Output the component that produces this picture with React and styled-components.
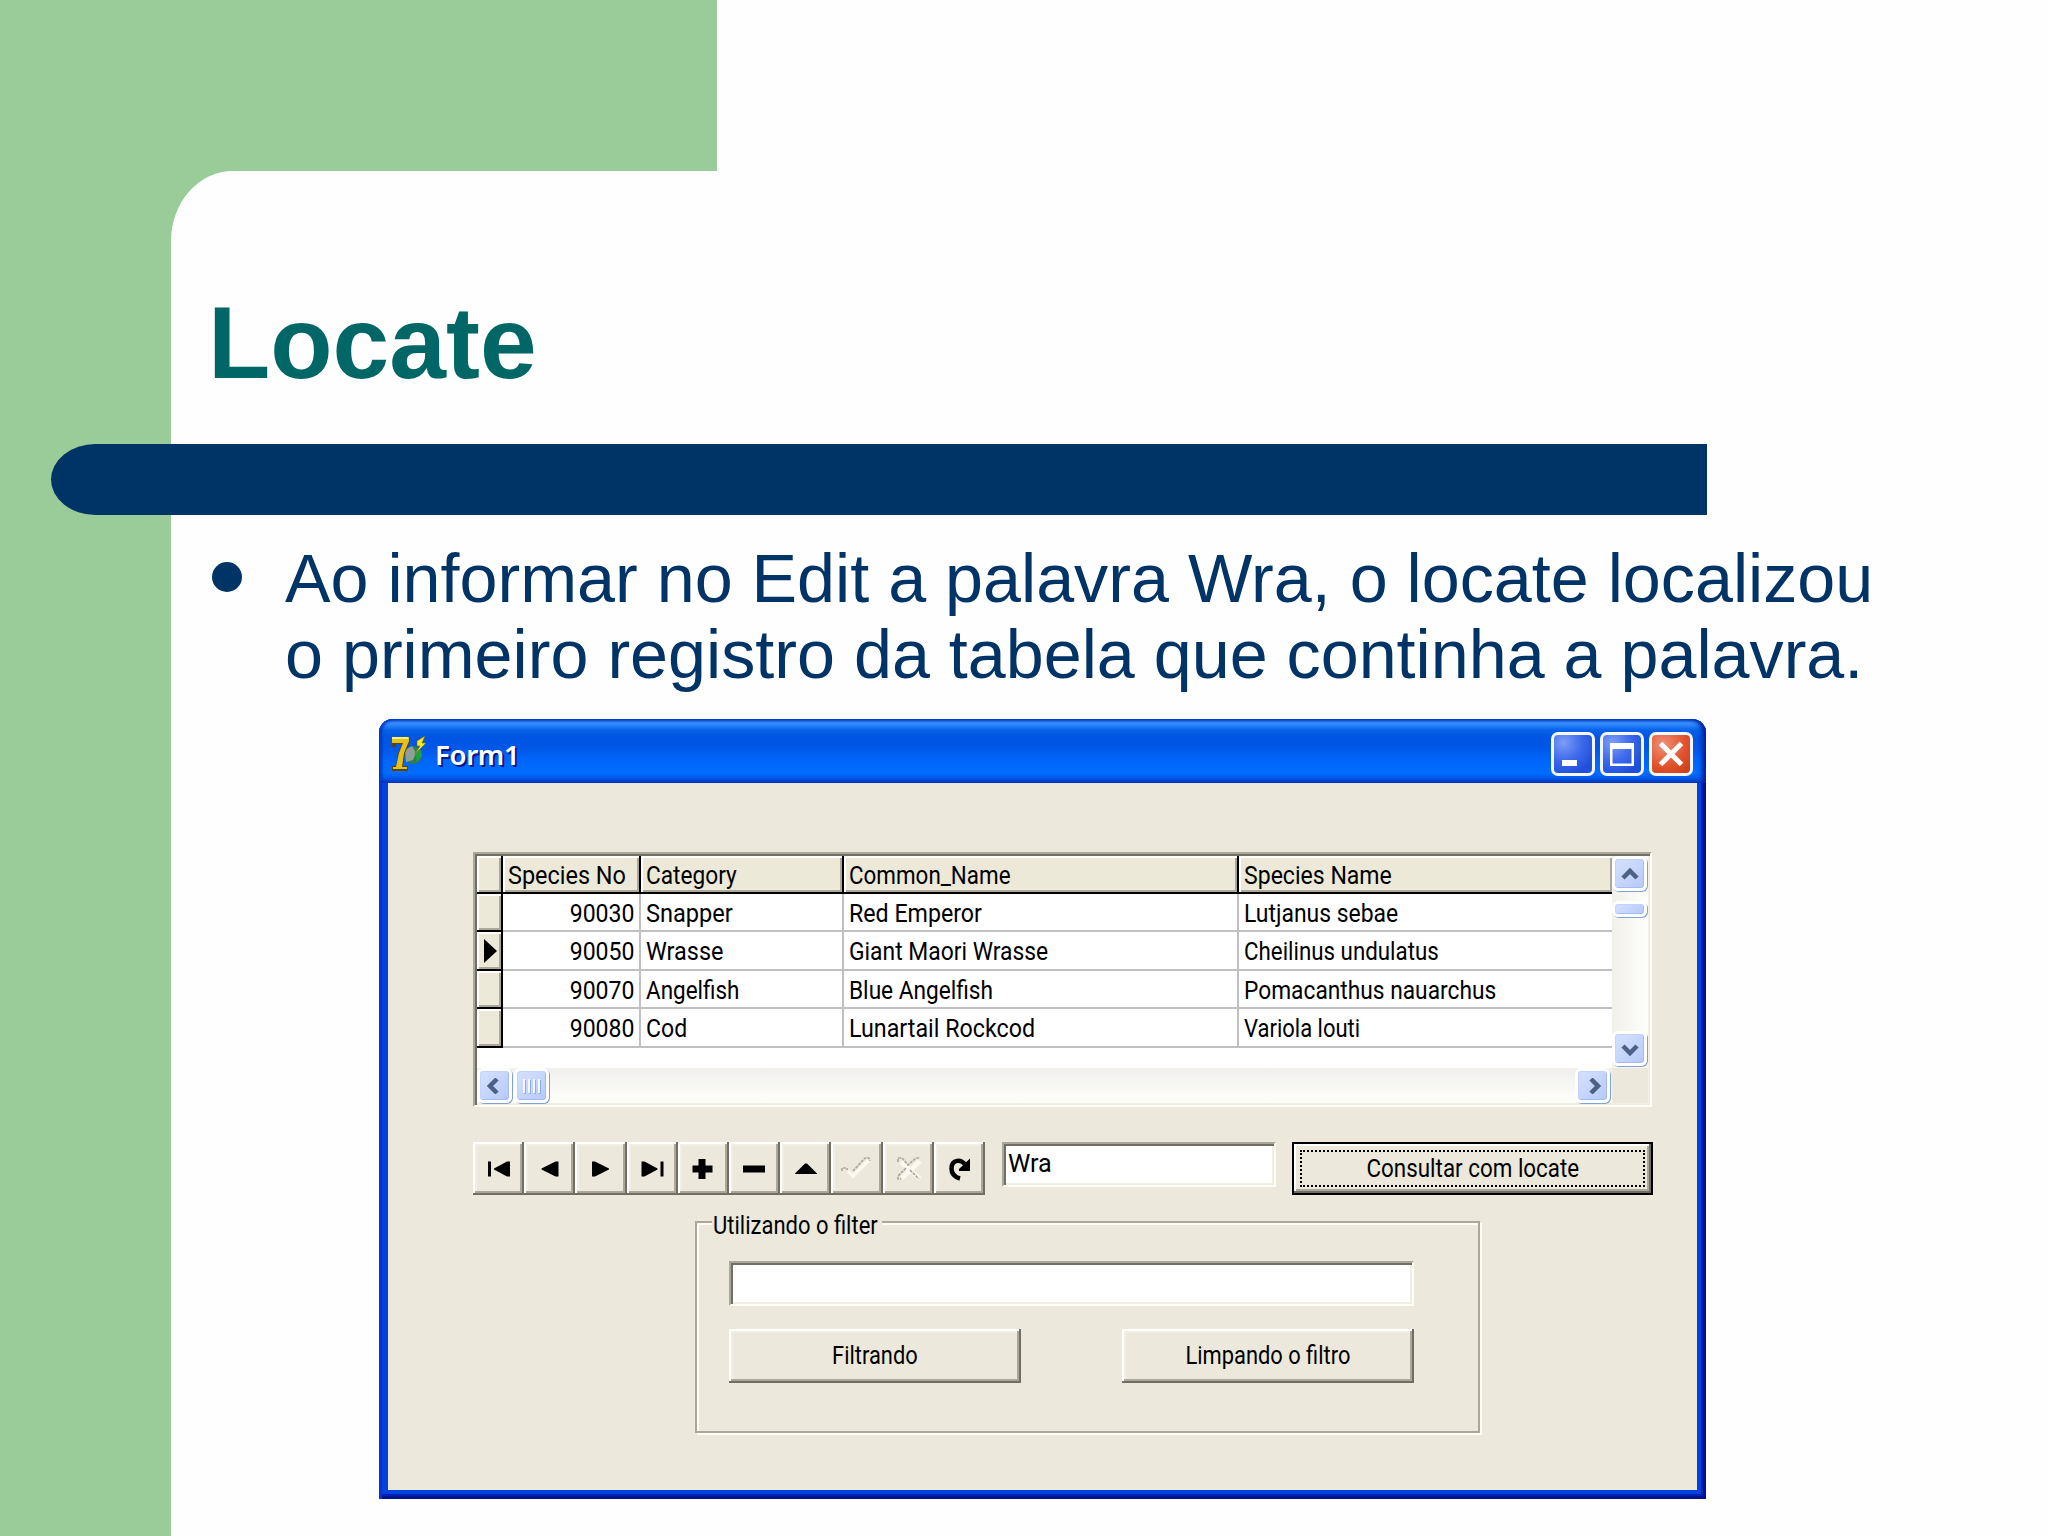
import React from "react";
import styled, { createGlobalStyle } from "styled-components";

const columns = [
  { key: "no", title: "Species No", narrow: 0.885 },
  { key: "category", title: "Category", narrow: 0.855 },
  { key: "common", title: "Common_Name", narrow: 0.845 },
  { key: "species", title: "Species Name", narrow: 0.87 },
];

// each cell is [text, horizontal narrowing]
const rows = [
  { no: ["90030", 0.87], category: ["Snapper", 0.89], common: ["Red Emperor", 0.875], species: ["Lutjanus sebae", 0.865] },
  {
    no: ["90050", 0.87],
    category: ["Wrasse", 0.885],
    common: ["Giant Maori Wrasse", 0.862],
    species: ["Cheilinus undulatus", 0.842],
    current: true,
  },
  { no: ["90070", 0.87], category: ["Angelfish", 0.848], common: ["Blue Angelfish", 0.855], species: ["Pomacanthus nauarchus", 0.858] },
  { no: ["90080", 0.87], category: ["Cod", 0.87], common: ["Lunartail Rockcod", 0.878], species: ["Variola louti", 0.83] },
];

const navIcons = [
  <path key="first" d="M15 19.5h3v15h-3zM37 19.5v15h-3l-13-7v-1l13-7z" />,
  <path key="prior" d="M34.5 19.5v15h-3l-14-7v-1l14-7z" />,
  <path key="next" d="M17 19.5v15h3l14-7v-1l-14-7z" />,
  <path key="last" d="M33.5 19.5h3v15h-3zM14.5 19.5v15h3l13-7v-1l-13-7z" />,
  <path key="insert" d="M20.5 17h7v6.5h7v7h-7V37h-7v-6.5h-6v-7h6z" />,
  <path key="delete" d="M14 23.5h22v7H14z" />,
  <path key="edit" d="M25 21.5h2L37 31.5v.5H15v-.5z" />,
  <g key="post" fill="none">
    <path d="M17 29l5 5 16-16" stroke="#fbf9f0" strokeWidth="3.5" />
    <path d="M11 29v-3h5v2M22 29l12-13h4l1 3" stroke="#aca899" strokeWidth="1.7" strokeDasharray="3 1" />
  </g>,
  <g key="cancel" fill="none">
    <path d="M18 20l19 17M37 19L19 36" stroke="#fbf9f0" strokeWidth="4.5" />
    <path d="M15 20v-4h4l6 7 8-7h4M23 26l-8 8v3h3M27 28l9 9" stroke="#aca899" strokeWidth="1.7" strokeDasharray="3 1" />
  </g>,
  <g key="refresh">
    <path d="M31 22.5C28 17 17.5 17 17.5 26.5c0 5 3 8.5 8.5 10" fill="none" stroke="#000" strokeWidth="4.5" />
    <path d="M36 16.5V29H25v-2z" />
  </g>,
];

const chevrons = {
  up: "M3 12l7-7 7 7",
  down: "M3 5l7 7 7-7",
  left: "M12 1L5 8l7 7",
  right: "M8 1l7 7-7 7",
};

function ScrollButton({ dir }) {
  return (
    <Knob>
      <svg width="20" height="16" viewBox="0 0 20 16">
        <path d={chevrons[dir]} fill="none" stroke="#4d6185" strokeWidth="4.5" />
      </svg>
    </Knob>
  );
}

function DelphiIcon() {
  return (
    <svg width="35" height="36" viewBox="0 0 35 36">
      <circle cx="22" cy="19" r="9" fill="#2f7d4a" />
      <path d="M14 14l7-4 4 7-3 7-7 2z" fill="#8f9f98" />
      <path d="M24 16l6-2 1 6-5 6z" fill="#1fa23c" />
      <path d="M1 1h18v5l-5 11-2 13h5v5H1v-5h4l2-13 4-9H5v3H1z" fill="#5a4312" />
      <path d="M1 1h17v4l-5 12-2 14h5v2H2v-2h3l3-14 4-10H1z" fill="#e6c01c" />
      <path d="M1 1h16v2H1z" fill="#fff06a" />
      <path d="M34 0l-8 5v5h3l-5 8 11-11h-4z" fill="#ffec12" stroke="#7a6a10" strokeWidth=".6" />
    </svg>
  );
}

export default function App() {
  return (
    <>
      <GlobalStyle />
      <Slide>
        <Backdrop>
          <Band />
          <Side>
            <Sheet />
          </Side>
        </Backdrop>
        <Content>
          <Title>Locate</Title>
          <Rule />
          <Bullet>
            <Dot />
            <Paragraph>
              <Line>Ao informar no Edit a palavra Wra, o locate localizou</Line>
              <Line>o primeiro registro da tabela que continha a palavra.</Line>
            </Paragraph>
          </Bullet>
          <Window>
            <TitleBar>
              <DelphiIcon />
              <Caption>Form1</Caption>
              <Controls>
                <Control>
                  <svg width="38" height="38" viewBox="0 0 38 38">
                    <path d="M8 25h15v6H8z" fill="#fff" />
                  </svg>
                </Control>
                <Control>
                  <svg width="38" height="38" viewBox="0 0 38 38">
                    <path d="M7 8h24v23H7zM9.5 14v14.5h19V14z" fill="#fff" fillRule="evenodd" />
                  </svg>
                </Control>
                <Control $close>
                  <svg width="38" height="38" viewBox="0 0 38 38">
                    <path d="M8.5 8.5l21 21M29.5 8.5l-21 21" stroke="#fff" strokeWidth="5" />
                  </svg>
                </Control>
              </Controls>
            </TitleBar>
            <Form>
              <Grid>
                <Table>
                  <HeadRow>
                    <Indicator />
                    {columns.map((col) => (
                      <Head key={col.key}>
                        <Text $narrow={col.narrow}>{col.title}</Text>
                      </Head>
                    ))}
                  </HeadRow>
                  {rows.map((row) => (
                    <Row key={row.no[0]}>
                      <Indicator>
                        {row.current && (
                          <svg width="13" height="24" viewBox="0 0 13 24">
                            <path d="M0 0l13 12L0 24z" />
                          </svg>
                        )}
                      </Indicator>
                      {columns.map((col) => (
                        <Cell key={col.key} $right={col.key === "no"}>
                          <Text $narrow={row[col.key][1]} $from={col.key === "no" ? "right" : "left"}>
                            {row[col.key][0]}
                          </Text>
                        </Cell>
                      ))}
                    </Row>
                  ))}
                </Table>
                <VScroll>
                  <ScrollButton dir="up" />
                  <VThumb />
                  <ScrollButton dir="down" />
                </VScroll>
                <HScroll>
                  <ScrollButton dir="left" />
                  <HThumb>
                    <i />
                    <i />
                    <i />
                    <i />
                  </HThumb>
                  <ScrollButton dir="right" />
                </HScroll>
              </Grid>
              <Tools>
                <Navigator>
                  {navIcons.map((icon) => (
                    <NavButton key={icon.key}>
                      <svg width="51" height="53" viewBox="0 0 51 53">
                        {icon}
                      </svg>
                    </NavButton>
                  ))}
                </Navigator>
                <Edit>
                  <Text $narrow={0.95}>Wra</Text>
                </Edit>
                <DefaultButton>
                  <Focus>
                    <Text $narrow={0.845} $from="center">
                      Consultar com locate
                    </Text>
                  </Focus>
                </DefaultButton>
              </Tools>
              <Group>
                <Legend>
                  <Text $narrow={0.83}>Utilizando o filter</Text>
                </Legend>
                <FilterEdit />
                <Buttons>
                  <Button>
                    <Text $narrow={0.825} $from="center">
                      Filtrando
                    </Text>
                  </Button>
                  <Button>
                    <Text $narrow={0.825} $from="center">
                      Limpando o filtro
                    </Text>
                  </Button>
                </Buttons>
              </Group>
            </Form>
          </Window>
        </Content>
      </Slide>
    </>
  );
}

const GlobalStyle = createGlobalStyle`
  * {
    box-sizing: border-box;
  }
  body {
    margin: 0;
    overflow: hidden;
    background: #fefefe;
  }
  svg {
    display: block;
    flex: none;
  }
`;

const Slide = styled.div`
  display: grid;
  width: 2048px;
  height: 1536px;
  font-family: "Liberation Sans", Arial, sans-serif;
`;
const Backdrop = styled.div`
  grid-area: 1 / 1;
  display: flex;
  flex-direction: column;
`;
const Band = styled.div`
  width: 717px;
  height: 171px;
  background: #99cc99;
`;
const Side = styled.div`
  flex: 1;
  display: flex;
  padding-left: 171px;
  background: linear-gradient(to right, #99cc99 300px, #fefefe 300px);
`;
const Sheet = styled.div`
  flex: 1;
  background: #fefefe;
  border-top-left-radius: 62px 70px;
`;
const Content = styled.div`
  grid-area: 1 / 1;
  display: flex;
  flex-direction: column;
  align-items: flex-start;
`;
const Title = styled.h1`
  margin: 0;
  height: 444px;
  padding: 283px 0 0 208px;
  font-size: 102px;
  line-height: 120px;
  color: #006666;
`;
const Rule = styled.div`
  width: 1656px;
  height: 71px;
  margin-left: 51px;
  background: #003366;
  border-radius: 45px 0 0 45px / 36px 0 0 36px;
`;
const Bullet = styled.div`
  display: flex;
  height: 204px;
  padding: 25px 0 0 212px;
`;
const Dot = styled.div`
  width: 30px;
  height: 30px;
  margin: 22px 43px 0 0;
  border-radius: 50%;
  background: #003366;
`;
const Paragraph = styled.div`
  color: #003366;
  font-size: 68.25px;
`;
const Line = styled.div`
  line-height: 76px;
  white-space: nowrap;
`;

const Window = styled.div`
  display: flex;
  flex-direction: column;
  width: 1327px;
  height: 780px;
  margin-left: 379px;
  padding: 0 9px 9px;
  border-radius: 14px 14px 0 0;
  background: #0442dc;
  box-shadow: inset 3px 0 #0831d9, inset -3px -3px #00138c, inset -5px -5px #0420b8;
  font-family: Roboto, "Liberation Sans", sans-serif;
  font-size: 26.5px;
  color: #000;
`;
const Text = styled.span`
  display: inline-block;
  white-space: nowrap;
  transform: scaleX(${(props) => props.$narrow});
  transform-origin: ${(props) => props.$from || "left"};
`;
const TitleBar = styled.div`
  display: flex;
  align-items: center;
  height: 64px;
  margin: 0 -9px;
  padding: 5px 13px 0 12px;
  border-radius: 14px 14px 0 0;
  background: linear-gradient(
    to bottom,
    #0a50d8 0,
    #3b92ff 4px,
    #2b84fb 6px,
    #0862e8 11px,
    #0055e2 18px,
    #0058e8 30px,
    #0066fb 42px,
    #006dff 54px,
    #005cf0 58px,
    #0040c8 64px
  );
  box-shadow: inset 3px 0 3px #0238c8, inset -4px 0 4px #0020a0;
`;
const Caption = styled.div`
  margin-left: 9px;
  padding-top: 3px;
  font-family: "Noto Sans", sans-serif;
  font-weight: 600;
  font-size: 27.5px;
  letter-spacing: -0.3px;
  line-height: 40px;
  color: #fff;
  text-shadow: 2px 2px #0a1883;
`;
const Controls = styled.div`
  display: flex;
  gap: 5px;
  margin-left: auto;
`;
const Control = styled.div`
  width: 44px;
  height: 44px;
  border: 3px solid #f4f7ff;
  border-radius: 7px;
  background: ${(props) =>
    props.$close
      ? "radial-gradient(circle at 30% 25%, #ee9078, #e2532e 55%, #c93c12)"
      : "radial-gradient(circle at 25% 20%, #7d9df6, #3c68ea 45%, #1f4fdb 80%)"};
`;
const Form = styled.div`
  flex: 1;
  padding: 69px 0 0 85px;
  background: #ece9dc;
`;

const Grid = styled.div`
  display: grid;
  grid-template: 212px 35px / 1135px 36px;
  width: 1179px;
  height: 255px;
  border: 2px solid;
  border-color: #aca899 #fffef8 #fffef8 #aca899;
  padding: 2px;
  box-shadow: inset 2px 2px #716f64, inset -2px -2px #f1efe2;
`;
const Table = styled.div`
  background: #fff;
`;
const HeadRow = styled.div`
  display: grid;
  grid-template: 100% / 26px 138px 203px 395px 373px;
  height: 38px;
`;
const Row = styled(HeadRow)`
  height: 38.4px;
`;
const Indicator = styled.div`
  display: flex;
  align-items: center;
  padding-left: 7px;
  border: solid #000;
  border-width: 0 2px 2px 0;
  background: #ece9d8;
  box-shadow: inset 2px 2px #fff, inset -2px -2px #aca899;
`;
const Head = styled.div`
  padding-left: 5px;
  line-height: 38px;
  border: solid #000;
  border-width: 0 2px 2px 0;
  background: #ece9d8;
  box-shadow: inset 2px 2px #fff, inset -2px -2px #aca899;

  &:last-child {
    border-right: 0;
  }
`;
const Cell = styled.div`
  padding: 0 5px;
  line-height: 37px;
  text-align: ${(props) => (props.$right ? "right" : "left")};
  border: solid #c0c0c0;
  border-width: 0 2px 2px 0;

  &:last-child {
    border-right: 0;
  }
`;
const Knob = styled.div`
  display: flex;
  align-items: center;
  justify-content: center;
  width: 35px;
  height: 35px;
  border: 3px solid #fff;
  border-radius: 6px;
  background: linear-gradient(135deg, #d5e1ff, #b6c9f8);
  box-shadow: inset -1px -1px #a5bbf0, inset 1px 1px #c3d3fd, 1px 1px #7ea3d6;
`;
const VScroll = styled.div`
  display: flex;
  flex-direction: column;
  background: linear-gradient(to right, #f1f0ea, #fefefb);

  ${Knob}:last-child {
    margin: auto 0 2px;
  }
`;
const VThumb = styled(Knob)`
  height: 16px;
  margin-top: 10px;
`;
const HScroll = styled.div`
  display: flex;
  background: linear-gradient(to bottom, #f0efed, #fefefb);

  ${Knob}:last-child {
    margin: 0 2px 0 auto;
  }
`;
const HThumb = styled(Knob)`
  margin-left: 2px;
  gap: 3px;

  i {
    width: 2px;
    height: 14px;
    background: #f3f7ff;
    box-shadow: 1px 1px #8fabeb;
  }
`;

const Tools = styled.div`
  display: flex;
  align-items: flex-start;
  margin-top: 35px;
`;
const Navigator = styled.div`
  display: flex;
  width: 512px;
`;
const NavButton = styled.div`
  flex: 1;
  height: 53px;
  overflow: hidden;
  box-shadow: inset -2px -2px #716f64, inset 2px 2px #fff, inset -4px -4px #aca899, inset 4px 4px #f1efe2;
`;
const Edit = styled.div`
  width: 274px;
  height: 45px;
  margin-left: 17px;
  padding-left: 4px;
  line-height: 38px;
  border: 2px solid;
  border-color: #aca899 #fffef8 #fffef8 #aca899;
  background: #fff;
  box-shadow: inset 2px 2px #716f64, inset -2px -2px #f1efe2;
`;
const DefaultButton = styled.div`
  width: 361px;
  height: 53px;
  margin-left: 16px;
  padding: 6px;
  border: 2px solid #000;
  box-shadow: inset -2px -2px #716f64, inset 2px 2px #fff, inset -4px -4px #aca899;
`;
const Focus = styled.div`
  height: 37px;
  border: 2px dotted #000;
  line-height: 32px;
  text-align: center;
`;

const Group = styled.div`
  width: 785px;
  height: 212px;
  margin: 26px 0 0 222px;
  padding: 0 32px;
  border: 2px solid #aca899;
  box-shadow: inset 2px 2px #fffef8, 2px 2px #fffef8;
`;
const Legend = styled.div`
  width: 170px;
  height: 32px;
  margin: -14px 0 20px -17px;
  padding-left: 1px;
  line-height: 32px;
  background: #ece9dc;
`;
const FilterEdit = styled(Edit)`
  width: 685px;
  margin-left: 0;
`;
const Buttons = styled.div`
  display: flex;
  justify-content: space-between;
  width: 685px;
  margin-top: 23px;
`;
const Button = styled.div`
  width: 292px;
  height: 54px;
  line-height: 52px;
  text-align: center;
  box-shadow: inset -2px -2px #716f64, inset 2px 2px #fff, inset -4px -4px #aca899, inset 4px 4px #f1efe2;
`;
